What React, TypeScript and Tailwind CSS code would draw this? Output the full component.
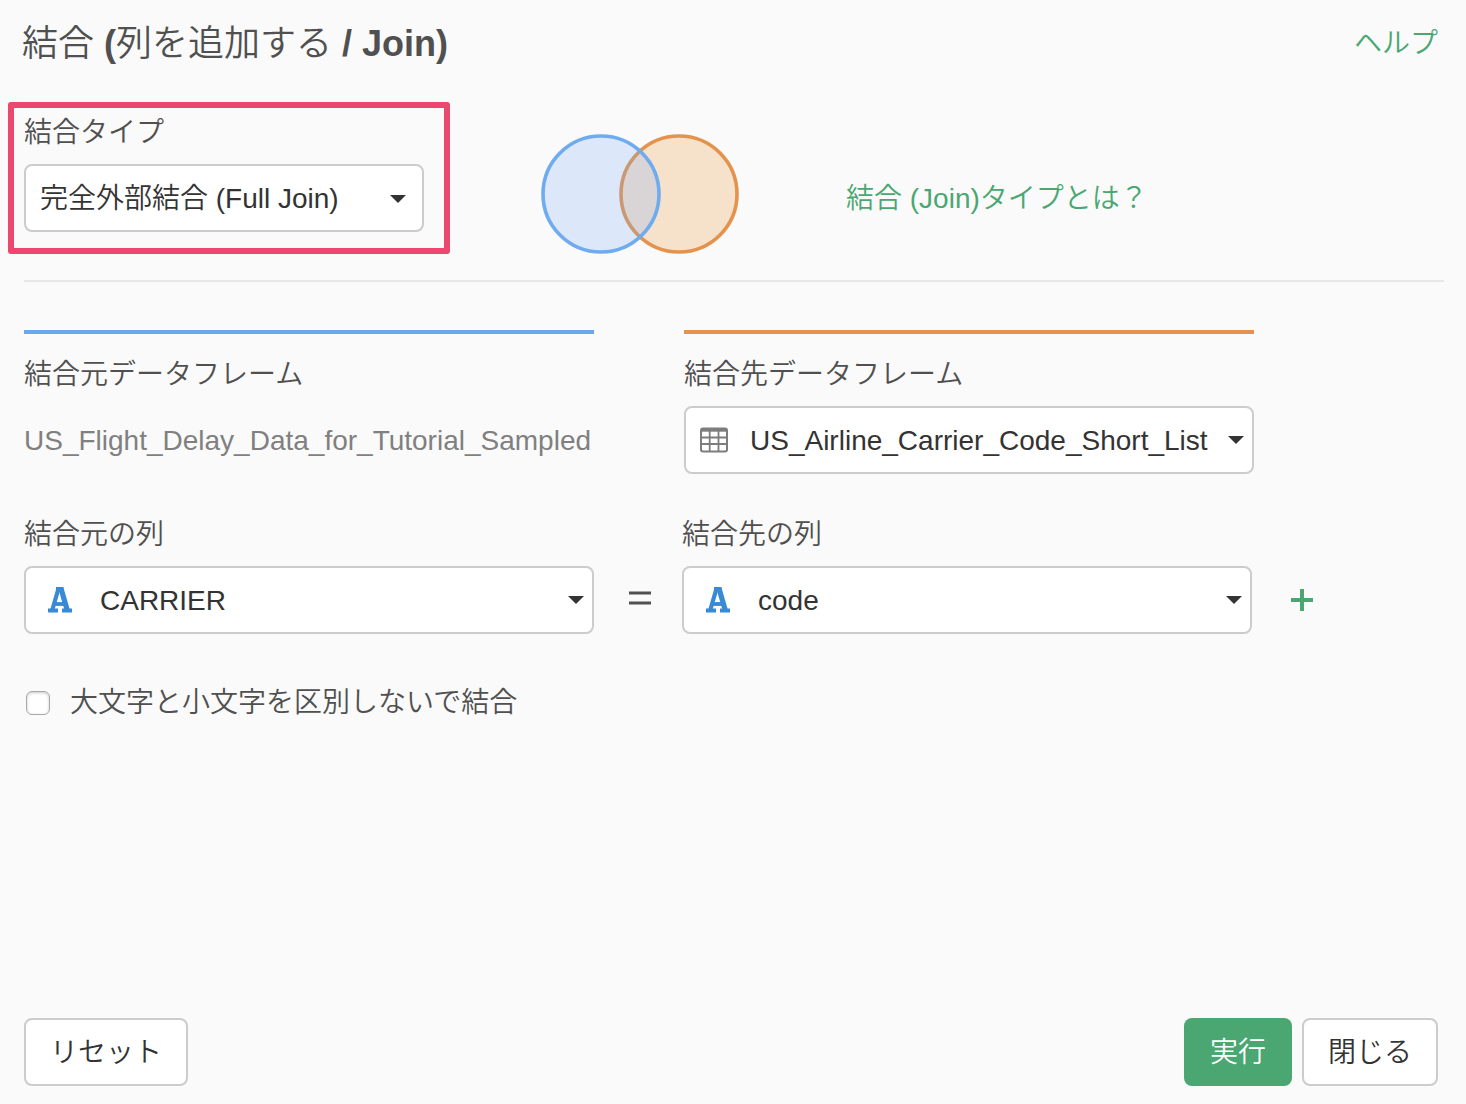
import type { ReactNode } from "react"

type SelectProps = {
  id: string
  value: string
  icon?: ReactNode
  className: string
  caretClassName?: string
}

function Caret() {
  return (
    <svg viewBox="0 0 16 8" className="h-2 w-4" fill="#333333" aria-hidden="true">
      <path d="M0 0h16L8 8z" />
    </svg>
  )
}

function TableIcon() {
  return (
    <svg viewBox="0 0 28 26" className="h-[26px] w-7" fill="none" stroke="#7d7d7d" aria-hidden="true">
      <rect x="1" y="1.5" width="26" height="23" rx="2" strokeWidth="2" />
      <path d="M1 3h26" strokeWidth="3.4" />
      <path d="M1 10.5h26M1 17h26M9.7 3v21M18.5 3v21" strokeWidth="1.8" />
    </svg>
  )
}

function TextTypeIcon() {
  return (
    <svg viewBox="0 0 26 26" className="h-[26px] w-[26px]" fill="none" stroke="#378ad3" aria-hidden="true">
      <path d="M9 2h7.500" strokeWidth="4" />
      <path d="M11.500 1.500 5 24" strokeWidth="4.200" />
      <path d="M14 1.500 20.500 24" strokeWidth="5.200" />
      <path d="M8 17h10" strokeWidth="3.800" />
      <path d="M1 23.600h10M15 23.600h10" strokeWidth="4" />
    </svg>
  )
}

function JoinDiagram() {
  return (
    <svg viewBox="0 0 198 120" className="h-[120px] w-[198px] shrink-0" strokeWidth="3.6" role="img" aria-label="完全外部結合">
      <circle cx="138" cy="60" r="58" fill="#f6e2cb" stroke="#e3934b" />
      <circle cx="60" cy="60" r="58" fill="#77aaf5" fillOpacity="0.23" stroke="#6eabef" />
    </svg>
  )
}

function Select({ id, value, icon, className, caretClassName = "pr-[10px]" }: SelectProps) {
  return (
    <div className="relative">
      <select
        id={id}
        className={`h-[68px] w-full appearance-none rounded-lg border-2 border-[#cccccc] bg-white pt-[2px] text-[28px] text-[#333333] ${className}`}
      >
        <option>{value}</option>
      </select>
      {icon && (
        <span className="pointer-events-none absolute inset-y-0 left-0 flex w-[72px] items-center justify-center">
          {icon}
        </span>
      )}
      <span className={`pointer-events-none absolute inset-y-0 right-0 flex items-center ${caretClassName}`}>
        <Caret />
      </span>
    </div>
  )
}

export default function App() {
  return (
    <div
      lang="ja"
      className="flex min-h-screen flex-col bg-[#fafafa] font-['Liberation_Sans','Noto_Sans_CJK_JP',sans-serif] text-[28px] leading-[42px] font-[350] text-[#505050]"
    >
      <header className="flex items-center justify-between pt-[18px] pr-7 pl-[22px]">
        <h1 className="text-[36px] leading-[52px]">
          結合 <span className="font-semibold">(</span>列を追加する <span className="font-semibold">/ Join)</span>
        </h1>
        <a href="#help" className="text-[#4aa772]">ヘルプ</a>
      </header>

      <main className="flex-1 pr-[22px] pl-6">
        <div className="mt-8 -ml-4 flex items-end">
          <div className="w-[442px] rounded-[3px] border-6 border-[#ec476f] pt-1 pr-5 pb-4 pl-[10px]">
            <label htmlFor="join-type" className="mb-[10px] block">結合タイプ</label>
            <Select
              id="join-type"
              value="完全外部結合 (Full Join)"
              className="pr-12 pl-[14px]"
              caretClassName="pr-[18px] pt-[2px]"
            />
          </div>
          <div className="ml-[91px]">
            <JoinDiagram />
          </div>
          <a href="#join-types" className="mb-[34px] ml-[107px] text-[#4aa772]">
            結合 (Join)タイプとは？
          </a>
        </div>

        <hr className="mt-[26px] border-t-2 border-[#e7e7e7]" />

        <div className="mt-12 grid grid-cols-[minmax(0,1fr)_minmax(0,1fr)] gap-x-[90px] pr-[190px]">
          <section className="border-t-4 border-[#6aa8ee] pt-5">
            <h2>結合元データフレーム</h2>
            <p className="mt-[10px] leading-[70px] text-[#808080]">US_Flight_Delay_Data_for_Tutorial_Sampled</p>
          </section>
          <section className="border-t-4 border-[#e3934f] pt-5">
            <label htmlFor="target-frame" className="mb-[10px] block">結合先データフレーム</label>
            <Select
              id="target-frame"
              value="US_Airline_Carrier_Code_Short_List"
              icon={<span className="pr-3"><TableIcon /></span>}
              className="pr-8 pl-16"
            />
          </section>
        </div>

        <div className="mt-[38px] grid grid-cols-[minmax(0,1fr)_88px_minmax(0,1fr)_192px] items-end">
          <div>
            <label htmlFor="source-column" className="mb-[10px] block">結合元の列</label>
            <Select id="source-column" value="CARRIER" icon={<TextTypeIcon />} className="pr-10 pl-[74px]" />
          </div>
          <span className="flex h-[68px] items-center justify-center pl-1">
            <svg viewBox="0 0 22 14" className="mb-1 h-[14px] w-[22px]" stroke="#505050" strokeWidth="3" role="img" aria-label="=">
              <path d="M0 2h22M0 12h22" />
            </svg>
          </span>
          <div>
            <label htmlFor="target-column" className="mb-[10px] block">結合先の列</label>
            <Select id="target-column" value="code" icon={<TextTypeIcon />} className="pr-10 pl-[74px]" />
          </div>
          <button type="button" aria-label="列を追加" className="mb-2 ml-6 flex size-[52px] items-center justify-center text-[#4aa772]">
            <svg viewBox="0 0 22 22" className="size-[22px]" stroke="currentColor" strokeWidth="4" aria-hidden="true">
              <path d="M0 11h22M11 0v22" />
            </svg>
          </button>
        </div>

        <div className="mt-12 flex items-center gap-5 pl-[2px]">
          <input
            id="ignore-case"
            type="checkbox"
            className="size-6 appearance-none rounded-[6px] border border-[#a8a8a8] bg-white shadow-[inset_0_1px_3px_#c8c8c8] checked:bg-[#4aa772]"
          />
          <label htmlFor="ignore-case">大文字と小文字を区別しないで結合</label>
        </div>
      </main>

      <footer className="flex gap-[10px] pr-7 pb-[18px] pl-6 text-[#333333]">
        <button type="button" className="mr-auto h-[68px] rounded-lg border-2 border-[#cccccc] bg-white px-6 pt-[2px]">
          リセット
        </button>
        <button type="button" className="h-[68px] rounded-lg bg-[#4aa772] px-[26px] pt-[2px] text-white">
          実行
        </button>
        <button type="button" className="h-[68px] rounded-lg border-2 border-[#cccccc] bg-white px-6 pt-[2px]">
          閉じる
        </button>
      </footer>
    </div>
  )
}
